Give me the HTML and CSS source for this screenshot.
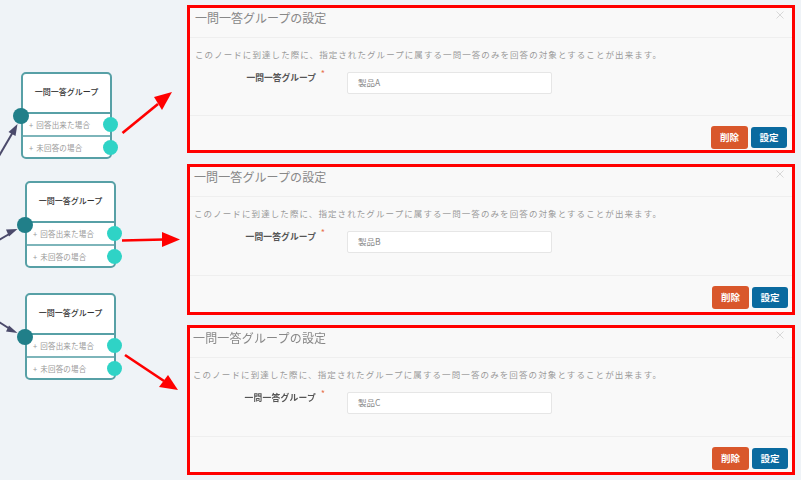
FILE: index.html
```html
<!DOCTYPE html>
<html lang="ja">
<head>
    <meta charset="UTF-8">
    <meta name="viewport" content="width=device-width, initial-scale=1.0">
    <title>一問一答グループの設定</title>
    <link rel="stylesheet" href="styles.css">
</head>
<body>
    <div class="canvas">
        <!-- Flow nodes -->
        <div class="node node-a">
            <div class="node-title">一問一答グループ</div>
            <div class="node-row">+ 回答出来た場合</div>
            <div class="node-row">+ 未回答の場合</div>
            <span class="port port-in"></span>
            <span class="port port-one"></span>
            <span class="port port-two"></span>
        </div>
        <div class="node node-b">
            <div class="node-title">一問一答グループ</div>
            <div class="node-row">+ 回答出来た場合</div>
            <div class="node-row">+ 未回答の場合</div>
            <span class="port port-in"></span>
            <span class="port port-one"></span>
            <span class="port port-two"></span>
        </div>
        <div class="node node-c">
            <div class="node-title">一問一答グループ</div>
            <div class="node-row">+ 回答出来た場合</div>
            <div class="node-row">+ 未回答の場合</div>
            <span class="port port-in"></span>
            <span class="port port-one"></span>
            <span class="port port-two"></span>
        </div>

        <!-- Arrows -->
        <svg class="arrows" width="190" height="480" viewBox="0 0 190 480">
            <g stroke="#4b4a6b" stroke-width="2" fill="#4b4a6b">
                <line x1="-1" y1="156" x2="13" y2="132"/>
                <polygon points="17.500,124 15.500,136 8.500,132" stroke="none"/>
                <line x1="-1" y1="240" x2="11" y2="233"/>
                <polygon points="17.500,229 9,236.500 6,229.500" stroke="none"/>
                <line x1="-1" y1="322" x2="10" y2="329"/>
                <polygon points="17.500,333 6,331.500 9,325.500" stroke="none"/>
            </g>
            <g stroke="#ff0000" stroke-width="2.700" fill="#ff0000">
                <line x1="122.500" y1="133" x2="158" y2="104"/>
                <polygon points="172,92 162,110 154,97" stroke="none"/>
                <line x1="122" y1="240.500" x2="164" y2="239.500"/>
                <polygon points="180,239.500 162,247 162,232" stroke="none"/>
                <line x1="125" y1="355" x2="164" y2="381"/>
                <polygon points="178,390 159,387 168,375" stroke="none"/>
            </g>
        </svg>

        <!-- Settings panels -->
        <div class="panel panel-a">
            <div class="panel-head">一問一答グループの設定
                <svg class="panel-close" width="8" height="8" viewBox="0 0 8 8"><path d="M.5.5l7 7M7.500.5l-7 7"/></svg>
            </div>
            <div class="panel-body">
                <p class="panel-text">このノードに到達した際に、指定されたグループに属する一問一答のみを回答の対象とすることが出来ます。</p>
                <div class="field">
                    <label class="field-label">一問一答グループ<span class="required">*</span></label>
                    <div class="field-input">製品A</div>
                </div>
            </div>
            <div class="panel-foot">
                <button class="btn btn-delete">削除</button>
                <button class="btn btn-save">設定</button>
            </div>
        </div>
        <div class="panel panel-b">
            <div class="panel-head">一問一答グループの設定
                <svg class="panel-close" width="8" height="8" viewBox="0 0 8 8"><path d="M.5.5l7 7M7.500.5l-7 7"/></svg>
            </div>
            <div class="panel-body">
                <p class="panel-text">このノードに到達した際に、指定されたグループに属する一問一答のみを回答の対象とすることが出来ます。</p>
                <div class="field">
                    <label class="field-label">一問一答グループ<span class="required">*</span></label>
                    <div class="field-input">製品B</div>
                </div>
            </div>
            <div class="panel-foot">
                <button class="btn btn-delete">削除</button>
                <button class="btn btn-save">設定</button>
            </div>
        </div>
        <div class="panel panel-c">
            <div class="panel-head">一問一答グループの設定
                <svg class="panel-close" width="8" height="8" viewBox="0 0 8 8"><path d="M.5.5l7 7M7.500.5l-7 7"/></svg>
            </div>
            <div class="panel-body">
                <p class="panel-text">このノードに到達した際に、指定されたグループに属する一問一答のみを回答の対象とすることが出来ます。</p>
                <div class="field">
                    <label class="field-label">一問一答グループ<span class="required">*</span></label>
                    <div class="field-input">製品C</div>
                </div>
            </div>
            <div class="panel-foot">
                <button class="btn btn-delete">削除</button>
                <button class="btn btn-save">設定</button>
            </div>
        </div>
    </div>
</body>
</html>
```

FILE: styles.css
```css
body {
    margin: 0;
    padding: 0;
    font-family: "Noto Sans CJK JP", "Noto Sans", sans-serif;
    background-color: #eff3f7;
}

.canvas {
    position: relative;
    width: 801px;
    height: 480px;
    overflow: hidden;
    filter: blur(0.45px);
}

.arrows {
    position: absolute;
    left: 0;
    top: 0;
}

/* nodes */
.node {
    position: absolute;
    width: 91px;
    box-sizing: border-box;
    background-color: white;
    border: 2px solid #57a0a6;
    border-radius: 5px;
}

.node-a { left: 21px; top: 72px; }
.node-b { left: 25px; top: 181px; }
.node-c { left: 25px; top: 293px; }

.node-title {
    height: 38px;
    line-height: 36px;
    text-align: center;
    font-size: 8px;
    font-weight: 500;
    color: #333;
    border-bottom: 2px solid #57a0a6;
}

.node-row {
    height: 21px;
    line-height: 21px;
    padding-left: 6px;
    font-size: 7.500px;
    letter-spacing: 0.2px;
    word-spacing: 1px;
    color: #999;
    white-space: nowrap;
}

.node-row + .node-row {
    height: 20px;
    border-top: 2px solid #7db5ba;
}

.port {
    position: absolute;
    width: 15px;
    height: 15px;
    border-radius: 50%;
    background-color: #2fd3c6;
}

.port-in {
    left: -10px;
    top: 34px;
    width: 16px;
    height: 16px;
    background-color: #217f89;
}

.port-one { right: -8px; top: 43px; }
.port-two { right: -8px; top: 66px; }

/* panels */
.panel {
    position: absolute;
    left: 187px;
    width: 608px;
    box-sizing: border-box;
    display: flex;
    flex-direction: column;
    background-color: #f9f9f9;
    border: 3px solid #ff0000;
    color: #999;
}

.panel-a { top: 5px; height: 148px; }
.panel-b { top: 164px; height: 151px; }
.panel-c { top: 325px; height: 150px; }

.panel-head {
    height: 29px;
    padding-left: 5px;
    line-height: 19px;
    font-size: 12px;
    color: #888;
    border-bottom: 1px solid #efefef;
    position: relative;
}

.panel-b .panel-head { padding-left: 4px; letter-spacing: 0.1px; }
.panel-c .panel-head { padding-left: 3px; letter-spacing: 0.18px; }

.panel-close {
    position: absolute;
    right: 8px;
    top: 3px;
    fill: none;
    stroke: #d8d8d8;
    stroke-width: 1;
}

.panel-body {
    flex: 1;
    padding: 0 5px;
}

.panel-text {
    margin: 9px 0 0;
    font-size: 8.500px;
    letter-spacing: 1.07px;
    line-height: 14px;
    white-space: nowrap;
}

.panel-b .panel-text { margin-left: -1px; letter-spacing: 1.09px; }
.panel-c .panel-text { margin-left: -2px; letter-spacing: 1.11px; }

.field {
    display: flex;
    align-items: flex-start;
    margin-top: 10px;
}

.field-label {
    width: 121px;
    flex-shrink: 0;
    box-sizing: border-box;
    text-align: right;
    font-size: 8.750px;
    font-weight: 700;
    line-height: 14px;
    color: #555;
    position: relative;
    white-space: nowrap;
}

.panel-b .field-label { letter-spacing: 0.12px; }
.panel-c .field-label { letter-spacing: 0.25px; }

.required {
    position: absolute;
    right: -9px;
    top: -4px;
    font-size: 9px;
    font-weight: 400;
    letter-spacing: 0;
    color: #e8744f;
}

.field-input {
    margin-left: 31px;
    margin-top: 1px;
    width: 205px;
    height: 22px;
    box-sizing: border-box;
    padding-left: 10px;
    line-height: 18px;
    font-size: 8.500px;
    color: #888;
    background-color: white;
    border: 1px solid #e6e6e6;
    border-radius: 2px;
}

.panel-foot {
    height: 35px;
    box-sizing: border-box;
    display: flex;
    justify-content: flex-end;
    align-items: flex-end;
    gap: 3px;
    padding: 0 5px 1px 0;
    border-top: 1px solid #efefef;
}

.panel-b .panel-foot { height: 37px; padding: 0 4px 3px 0; }
.panel-c .panel-foot { height: 36px; padding: 0 4px 2px 0; }

.btn {
    padding: 0 0 2px;
    border: none;
    border-radius: 3px;
    color: white;
    font-family: inherit;
    font-size: 9.500px;
    font-weight: 700;
}

.btn-delete {
    width: 37px;
    height: 23px;
    background-color: #d9572b;
}

.btn-save {
    width: 36px;
    height: 21px;
    margin-bottom: 1px;
    background-color: #0a6a9f;
}
```
